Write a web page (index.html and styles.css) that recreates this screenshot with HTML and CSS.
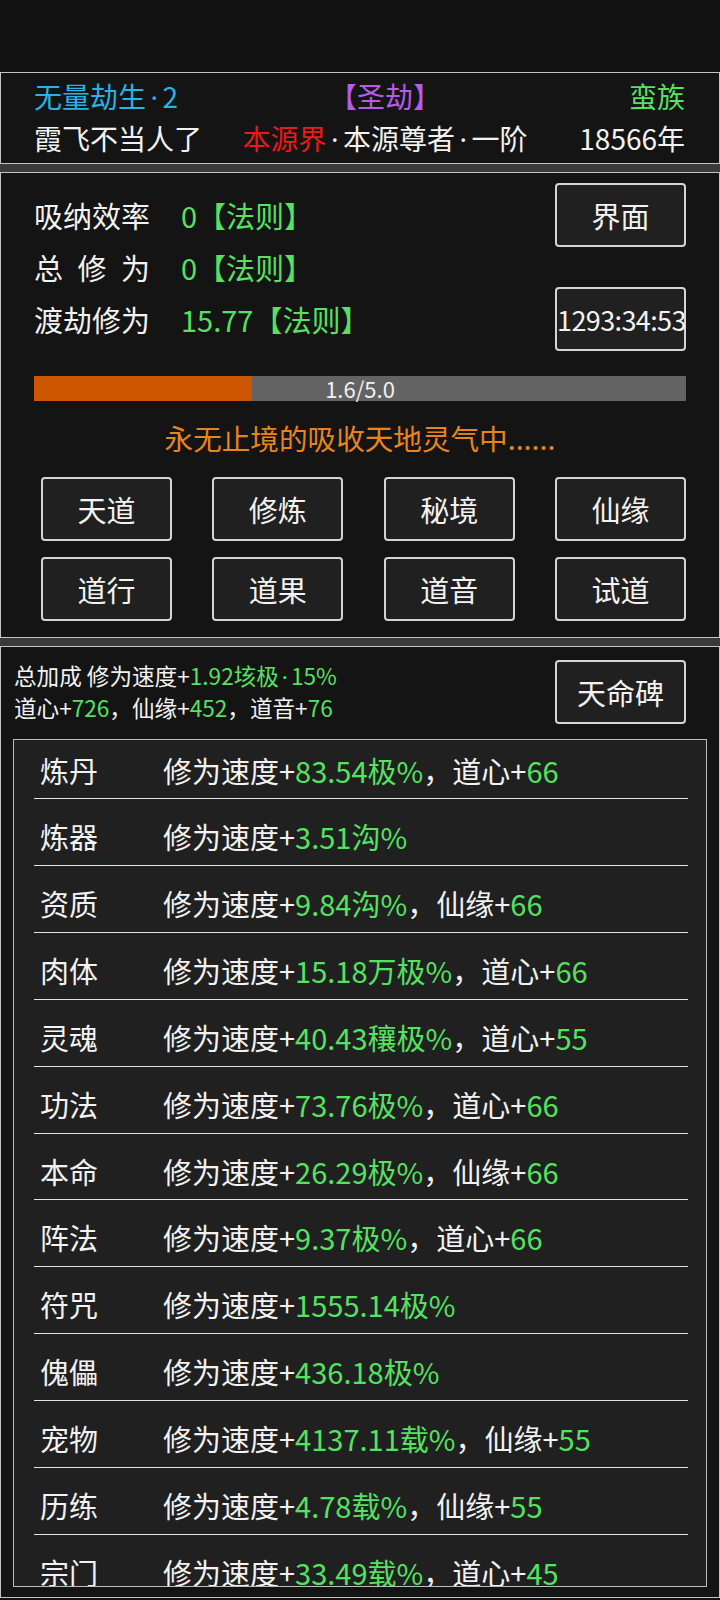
FILE: index.html
```html
<!DOCTYPE html>
<html lang="zh-CN">
<head>
<meta charset="utf-8">
<title>修仙</title>
<link rel="stylesheet" href="styles.css">
</head>
<body>
<div class="app">
  <div class="topband"></div>

  <section class="panel head">
    <div class="head-row">
      <span class="cyan">无量劫生<span class="dot">·</span>2</span>
      <span class="mid purple">【圣劫】</span>
      <span class="right green">蛮族</span>
    </div>
    <div class="head-row">
      <span>霞飞不当人了</span>
      <span class="mid"><span class="red">本源界</span><span class="dot">·</span>本源尊者<span class="dot">·</span>一阶</span>
      <span class="right">18566年</span>
    </div>
  </section>

  <div class="strip"></div>

  <section class="panel main">
    <div class="stats">
      <div class="stat s1"><span class="label">吸纳效率</span><span class="green">0【法则】</span></div>
      <div class="stat s2"><span class="label spread">总修为</span><span class="green">0【法则】</span></div>
      <div class="stat s3"><span class="label">渡劫修为</span><span class="green">15.77【法则】</span></div>
      <button class="btn b1">界面</button>
      <button class="btn b2 timer">1293:34:53</button>
    </div>
    <div class="bar">
      <div class="bar-fill" style="width:33.5%"></div>
      <span class="bar-text">1.6/5.0</span>
    </div>
    <div class="status">永无止境的吸收天地灵气中......</div>
    <div class="grid">
      <button class="btn">天道</button>
      <button class="btn">修炼</button>
      <button class="btn">秘境</button>
      <button class="btn">仙缘</button>
      <button class="btn">道行</button>
      <button class="btn">道果</button>
      <button class="btn">道音</button>
      <button class="btn">试道</button>
    </div>
  </section>

  <div class="strip"></div>

  <section class="panel bonus">
    <div class="bonus-head">
      <div class="summary">
        <div>总加成 修为速度+<span class="green">1.92垓极<span class="dot">·</span>15%</span></div>
        <div>道心+<span class="green">726</span>，仙缘+<span class="green">452</span>，道音+<span class="green">76</span></div>
      </div>
      <button class="btn">天命碑</button>
    </div>
    <div class="box">
      <ul class="list">
        <li><span class="name">炼丹</span><span>修为速度+<span class="green">83.54极%</span>，道心+<span class="green">66</span></span></li>
        <li><span class="name">炼器</span><span>修为速度+<span class="green">3.51沟%</span></span></li>
        <li><span class="name">资质</span><span>修为速度+<span class="green">9.84沟%</span>，仙缘+<span class="green">66</span></span></li>
        <li><span class="name">肉体</span><span>修为速度+<span class="green">15.18万极%</span>，道心+<span class="green">66</span></span></li>
        <li><span class="name">灵魂</span><span>修为速度+<span class="green">40.43穰极%</span>，道心+<span class="green">55</span></span></li>
        <li><span class="name">功法</span><span>修为速度+<span class="green">73.76极%</span>，道心+<span class="green">66</span></span></li>
        <li><span class="name">本命</span><span>修为速度+<span class="green">26.29极%</span>，仙缘+<span class="green">66</span></span></li>
        <li><span class="name">阵法</span><span>修为速度+<span class="green">9.37极%</span>，道心+<span class="green">66</span></span></li>
        <li><span class="name">符咒</span><span>修为速度+<span class="green">1555.14极%</span></span></li>
        <li><span class="name">傀儡</span><span>修为速度+<span class="green">436.18极%</span></span></li>
        <li><span class="name">宠物</span><span>修为速度+<span class="green">4137.11载%</span>，仙缘+<span class="green">55</span></span></li>
        <li><span class="name">历练</span><span>修为速度+<span class="green">4.78载%</span>，仙缘+<span class="green">55</span></span></li>
        <li><span class="name">宗门</span><span>修为速度+<span class="green">33.49载%</span>，道心+<span class="green">45</span></span></li>
      </ul>
    </div>
  </section>
</div>
</body>
</html>
```

FILE: styles.css
```css
* { box-sizing: border-box; }

html, body {
  margin: 0;
  padding: 0;
  background: #111111;
}

body {
  width: 720px;
  height: 1600px;
  overflow: hidden;
  color: #f2f2f2;
  font-family: "Noto Sans CJK SC", "Noto Sans", sans-serif;
  font-size: 28px;
}

.app {
  display: flex;
  flex-direction: column;
}

.topband {
  height: 72px;
  background: #111111;
}

.panel {
  border: 1px solid #c4c4c4;
  background: #141414;
}

.strip {
  height: 8px;
  background: #3a3a3a;
}

.cyan { color: #27b3e6; }
.purple { color: #b35de8; }
.green { color: #54e260; }
.red { color: #e81a1a; }

.dot {
  font-family: "Noto Sans", "DejaVu Sans", sans-serif;
  margin: 0 4.5px;
  line-height: 0;
}

.summary .dot {
  margin: 0 3px;
}

/* header panel */
.head {
  padding: 3px 34px 4px 33px;
}

.head-row {
  display: grid;
  grid-template-columns: 205px 1fr 154px;
  height: 41.5px;
  line-height: 41.5px;
  white-space: nowrap;
}

.head-row .mid { text-align: center; }
.head-row .right { text-align: right; }

/* main panel */
.main {
  padding: 10px 33px 16px 33px;
  font-size: 29px;
}

.stats {
  display: grid;
  grid-template-columns: 1fr 131px;
  grid-template-rows: 64px 40px 64px;
}

.stat {
  display: flex;
  align-items: center;
  white-space: nowrap;
  grid-column: 1;
}

.s1 { grid-row: 1; }
.s2 { grid-row: 2; }
.s3 { grid-row: 3; }

.label {
  width: 147px;
  flex: none;
}

.spread {
  letter-spacing: 14.5px;
}

.btn {
  display: block;
  font-family: inherit;
  font-size: 29px;
  line-height: 1;
  color: #f2f2f2;
  background: #202020;
  border: 2px solid #d4d4d4;
  border-radius: 4px;
  width: 131px;
  height: 64px;
  padding: 0;
  white-space: nowrap;
}

.b1 { grid-column: 2; grid-row: 1; }
.b2 { grid-column: 2; grid-row: 3; }

.timer {
  letter-spacing: -0.6px;
  font-size: 27px;
}

.bar {
  position: relative;
  height: 25px;
  margin-top: 25px;
  background: #636363;
}

.bar-fill {
  height: 100%;
  background: #cc5500;
}

.bar-text {
  position: absolute;
  left: 0;
  right: 0;
  top: 0;
  text-align: center;
  font-size: 22px;
  line-height: 25px;
  color: #f0f0f0;
}

.status {
  margin-top: 17px;
  height: 40px;
  line-height: 40px;
  font-size: 28.6px;
  text-align: center;
  color: #e8841c;
}

.grid {
  margin: 19px 0 0 7px;
  display: grid;
  grid-template-columns: repeat(4, 131px);
  justify-content: space-between;
  row-gap: 16px;
}

/* bonus panel */
.bonus {
  padding: 13px 12px 10px 12px;
}

.bonus-head {
  display: flex;
  justify-content: space-between;
  align-items: flex-start;
  padding: 0 21px 0 1px;
}

.summary {
  font-size: 22.6px;
  line-height: 32px;
  white-space: nowrap;
}

.summary div {
  height: 32px;
}

.box {
  margin-top: 15px;
  height: 848px;
  border: 1px solid #bdbdbd;
  background: #202020;
  overflow: hidden;
  font-size: 29px;
}

.list {
  list-style: none;
  margin: -7.5px 18px 0 20px;
  padding: 0;
}

.list li {
  display: flex;
  padding: 19px 0 10.85px 6px;
  line-height: 36px;
  border-bottom: 1px solid #e2e2e2;
  white-space: nowrap;
}

.name {
  width: 123px;
  flex: none;
}
```
